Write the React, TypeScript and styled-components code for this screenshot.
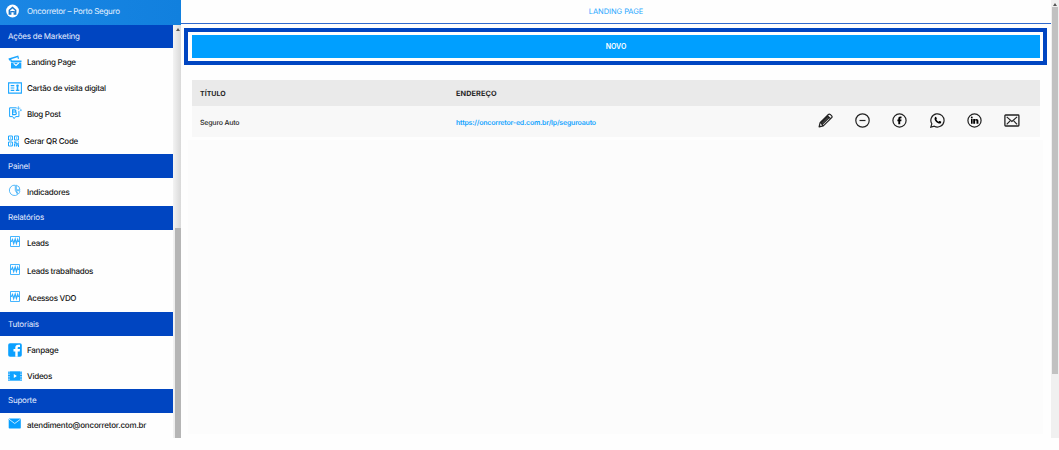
import React from "react";
import styled, { createGlobalStyle } from "styled-components";

const Global = createGlobalStyle`
  * { box-sizing: border-box; }
  body { margin: 0; background: #fefefe; font-family: Inter, "Liberation Sans", sans-serif; overflow: hidden;
    text-rendering: geometricPrecision; }
  svg { display: block; flex: none; }
`;
const Page = styled.div`display: flex; width: 1059px; height: 438px;`;
const Sidebar = styled.aside`width: 181px; height: 438px; flex: none;`;
const Brand = styled.header`
  height: 25px; display: flex; align-items: center; padding: 0 0 4px 6px; gap: 8px;
  background: linear-gradient(90deg, #1b86e4, #1180de); color: #e3f1ff;
`;
const Label = styled.span<{ $size?: number; $spacing?: number; $weight?: number }>`
  font-size: ${(p) => p.$size ?? 8}px; letter-spacing: ${(p) => p.$spacing ?? 0}px;
  font-weight: ${(p) => p.$weight ?? 400}; line-height: 12px; white-space: nowrap;
`;
const MenuArea = styled.div`display: flex; height: 413px;`;
const Menu = styled.nav`width: 173px;`;
const Section = styled.div<{ $h: number }>`
  height: ${(p) => p.$h}px; background: #0045c1; color: #e6eeff;
  display: flex; align-items: center; padding: 0 0 1px 8px;
`;
const Item = styled.div<{ $h: number }>`
  height: ${(p) => p.$h}px; display: flex; align-items: center; padding: 0 0 0 8px; color: #161616;
`;
const IconSlot = styled.span<{ $w: number; $up: number }>`
  width: ${(p) => p.$w}px; flex: none; padding-bottom: ${(p) => p.$up}px;
`;
const SideTrack = styled.div`
  width: 8px; padding: 0 0 0 1px; display: flex; flex-direction: column; align-items: center;
  justify-content: space-between; background: linear-gradient(90deg, #f3f3f3, #d9d9d9);
`;
const SideThumb = styled.div`width: 6px; height: 210px; background: #b5b5b5;`;
const Arrow = styled.i`
  width: 0; height: 0; margin-top: 3px; border: 2px solid transparent; border-top: 0; border-bottom: 3px solid #555;
`;
const Main = styled.main`width: 870px; flex: none;`;
const Title = styled.header`
  height: 24px; border-bottom: 1px solid #2e68cd; color: #27a7ff; display: flex;
  justify-content: center; align-items: center;
`;
const Highlight = styled.div`
  width: 863px; height: 37px; margin: 4px 0 0 3px; border: 4px solid #0045c1; padding: 3px 3px 3px 4px;
`;
const NewButton = styled.button`
  display: flex; justify-content: center; align-items: center; width: 848px; height: 23px; padding: 0;
  border: 0; background: #009fff; color: #fff; font-family: inherit;
`;
const Table = styled.section`width: 848px; margin: 15px 0 0 11px;`;
const HeadRow = styled.div`
  display: grid; grid-template-columns: 256px 1fr; height: 26px; align-items: center; padding: 1px 0 0 8px;
  background: #eaeaea; color: #262626;
`;
const DataRow = styled.div`
  display: grid; grid-template-columns: 256px 1fr 203px 20px; height: 31px; align-items: center;
  padding: 2px 0 0 8px; background: #f8f8f8; color: #222;
`;
const Link = styled.a`color: #15a4ff; display: flex;`;
const Actions = styled.div`display: flex; justify-content: space-between; padding: 0 0 4px 1px;`;
const EmptyArea = styled.div`height: 294px; margin: 3px 8px 0 7px; background: #fcfcfc;`;
const PageTrack = styled.div`
  width: 8px; background: #f0f0f0; display: flex; flex-direction: column; align-items: center;
`;
const PageThumb = styled.div`width: 6px; height: 367px; margin-top: 1px; background: #c1c1c1;`;

const blue = "#1ba6ff";
const Home = () => (
  <svg width="13" height="14" viewBox="0 0 13 14"><circle cx="6.5" cy="7" r="6.4" fill="#fff" />
    <path d="M6.5 2.6 10.4 6v4.7H7.6V8.2H5.4v2.5H2.6V6z" fill="#1b79cd" />
    <path d="M6.5 4.6 8.9 6.6v2.6h-.2V7H4.3v2.2h-.2V6.6z" fill="#fff" /></svg>
);
const Landing = () => (
  <svg width="14" height="14" viewBox="0 0 14 14">
    <path d="M.4 3.6 10.2.6l.9 3-1.2.3-.4-1.6-6.3 2 .7 1.3H1.2zM2.6 5.4h10.9v1.5H2.6zM3 7.5h10.3v5.9H3z" fill={blue} />
    <path d="m5.6 8.4 2.4 2.1 2.8-2.6" fill="none" stroke="#fff" strokeWidth="1.2" /></svg>
);
const CardIcon = () => (
  <svg width="14" height="12" viewBox="0 0 14 12">
    <path d="M.6.9h12.8v10.2H.6z" fill="none" stroke={blue} strokeWidth="1.1" />
    <path d="M2.7 3.7h3.6M2.7 6h3.6M2.7 8.3h3.6" stroke={blue} strokeWidth="1.2" />
    <circle cx="9.5" cy="3.8" r="1.3" fill={blue} /><path d="M8.7 5h1.6v2.8h1v1.3H7.8V7.8h.9z" fill={blue} /></svg>
);
const Blog = () => (
  <svg width="14" height="14" viewBox="0 0 14 14" fill="none" stroke={blue}>
    <path d="M8.5 1.8H1.6v8.8h3l1.5 2 1.6-2h3.2V5" strokeWidth="1" />
    <path d="M4.6 3.8h2c1.7 0 1.7 2.2 0 2.2h-2 2.4c1.8 0 1.8 2.6 0 2.6H4.6z" strokeWidth="1.2" />
    <path d="M10.4.2v4M8.4 2.2h4M12.8 3.2v2M11.8 4.2h2" strokeWidth=".6" /></svg>
);
const Qr = () => (
  <svg width="11" height="12" viewBox="0 0 11 12" fill="none" stroke={blue} strokeWidth="1">
    <path d="M.5 1h3.9v4H.5zM6.5 1h3.9v4H6.5zM.5 7h3.9v4H.5z" />
    <path d="M2 3h1M8 3h1M2 9h1M6 7.1h2v1.6h3M6.5 8.5v3M8.3 9.5v2M8 10h2.5v2M10.4 6.5v1" strokeWidth="1.1" /></svg>
);
const Pie = () => (
  <svg width="13" height="13" viewBox="0 0 13 13" fill="none" stroke="#45b2f8" strokeWidth=".9">
    <path d="M7.3 1.2a5.2 5.2 0 1 0 2.4 9.3L7.3 6.4zM8.3 1.2v4.6h3.6A4.6 4.6 0 0 0 8.3 1.2M8.2 6.7l2.1 3.3c1-.9 1.5-1.9 1.5-3.3z" /></svg>
);
const Pulse = () => (
  <svg width="13" height="11" viewBox="0 0 13 11" fill="none" stroke="#30adff">
    <path d="M2.5.5h9v10h-9z" strokeWidth=".9" />
    <path d="M2.2 5.5h1.2l1.1-2 1.2 4L7.2 3l1.2 4.5 1.3-4 .7 2h1.4" strokeWidth="1.2" /></svg>
);
const Fanpage = () => (
  <svg width="14" height="14" viewBox="0 0 14 14"><rect x=".2" y=".2" width="13.6" height="13.6" rx="1.8" fill="#0ba0ff" />
    <path d="M7.3 13.8V8.4H5.5V6.1h1.8V4.7c0-2 1-3 2.9-3H12v2.2h-1.2c-.9 0-1.1.4-1.1 1.1v1.1H12l-.3 2.3h-2v5.4z" fill="#fff" /></svg>
);
const Video = () => (
  <svg width="14" height="10" viewBox="0 0 14 10"><path d="M0 .3h14v9.4H0z" fill="#10a2ff" />
    <path d="M1 0v10M13 0v10" stroke="#fff" strokeWidth=".9" strokeDasharray="1.5 1" /><path d="m5.8 3 3.1 2-3.1 2z" fill="#fff" /></svg>
);
const MailBlue = () => (
  <svg width="13" height="11" viewBox="0 0 13 11"><rect x=".7" y=".5" width="12.1" height="10" rx=".8" fill="#079fff" />
    <path d="m1 1.2 5.7 4.3 5.8-4.3" fill="none" stroke="#d9f2ff" strokeWidth=".9" /></svg>
);

const Pencil = () => (
  <svg width="15" height="15" viewBox="0 0 15 15" fill="none" stroke="#222" strokeWidth="1.2" strokeLinejoin="round">
    <path d="m1.1 13.9 1-4.3L10.4 1.5q.8-.8 1.8-.1l1.5 1.5q.8.9 0 1.7L5.3 12.9zM2.1 9.6l1.4.4.4 1.4 1.4 1.5M9.3 2.6l3.3 3.2M3.5 10l7-7M4.3 11.3l7.1-7M1.2 13.8l1.2-1.1" /></svg>
);
const Minus = () => (
  <svg width="15" height="15" viewBox="0 0 15 15" fill="none" stroke="#222" strokeWidth="1.2"><circle cx="7.5" cy="7.5" r="6.7" /><path d="M4.5 7.5h6" /></svg>
);
const Facebook = () => (
  <svg width="15" height="15" viewBox="0 0 15 15"><circle cx="7.5" cy="7.5" r="6.6" fill="none" stroke="#222" strokeWidth="1.2" />
    <path d="M6.3 11.3V8.2H5.4V6.5h.9v-.9c0-1.3.8-2.1 2.2-2.1h1v1.7h-.8c-.4 0-.5.2-.5.6v.7h1.3l-.2 1.7H8.2v3.1z" fill="#000" /></svg>
);
const Whatsapp = () => (
  <svg width="15" height="15" viewBox="0 0 15 15"><path d="m.8 14.1 1-3.3a6.6 6.6 0 1 1 2.5 2.4z" fill="none" stroke="#222" strokeWidth="1.2" />
    <path d="M5.2 4.1c.6-.5 1-.2 1.2.3l.4 1c.2.5-.5.8-.5 1.2.5 1 1.2 1.7 2.2 2.1.5 0 .8-.9 1.3-.7l1.2.6c.4.3.2 1.2-.2 1.6-1.1 1-3.4 0-4.8-1.5C4.5 7.3 4 5.1 5.2 4.1z" fill="#000" /></svg>
);
const Linkedin = () => (
  <svg width="15" height="15" viewBox="0 0 15 15"><circle cx="7.5" cy="7.5" r="6.6" fill="none" stroke="#222" strokeWidth="1.2" />
    <circle cx="4.8" cy="4.5" r=".9" /><path d="M4 6h1.6v4.7H4zM6.2 6H8v.6c1.2-1.2 3.4-.6 3.4 1.3v2.8H9.5V8.2c0-1.2-1.4-1.1-1.4 0v2.5H6.2z" /></svg>
);
const Mail = () => (
  <svg width="16" height="15" viewBox="0 0 16 15" fill="none" stroke="#222" strokeWidth="1.3"><rect x=".9" y="2" width="14" height="11" rx=".7" />
    <path d="m2.7 3.9 5.2 4.5 5.2-4.5M2.7 11.3l3.4-3.4M13.1 11.3 9.7 7.9" strokeWidth="1.2" /></svg>
);

type Entry = { text: string; h: number; icon?: () => React.ReactElement; slot?: number; up?: number; spacing?: number };
const entries: Entry[] = [
  { text: "Ações de Marketing", h: 23, spacing: -0.22 },
  { text: "Landing Page", h: 27, icon: Landing, spacing: -0.27 },
  { text: "Cartão de visita digital", h: 26, icon: CardIcon, spacing: -0.27 },
  { text: "Blog Post", h: 26, icon: Blog, up: 3, spacing: -0.27 },
  { text: "Gerar QR Code", h: 27, icon: Qr, slot: 16, spacing: -0.25 },
  { text: "Painel", h: 24, spacing: -0.18 },
  { text: "Indicadores", h: 27.5, icon: Pie, up: 3, spacing: -0.22 },
  { text: "Relatórios", h: 24, spacing: -0.15 },
  { text: "Leads", h: 27.5, icon: Pulse, up: 3, spacing: -0.25 },
  { text: "Leads trabalhados", h: 27.5, icon: Pulse, up: 3, spacing: -0.27 },
  { text: "Acessos VDO", h: 27.5, icon: Pulse, up: 3, spacing: -0.29 },
  { text: "Tutoriais", h: 24, spacing: -0.18 },
  { text: "Fanpage", h: 27, icon: Fanpage, spacing: -0.25 },
  { text: "Videos", h: 25.5, icon: Video, spacing: -0.25 },
  { text: "Suporte", h: 24, spacing: -0.22 },
  { text: "atendimento@oncorretor.com.br", h: 25.5, icon: MailBlue, up: 3, spacing: -0.2 },
];

export default function App() {
  return (
    <>
      <Global />
      <Page>
        <Sidebar>
          <Brand><Home /><Label $spacing={-0.27}>Oncorretor – Porto Seguro</Label></Brand>
          <MenuArea>
            <Menu>
              {entries.map(({ text, h, icon: Icon, slot, up, spacing }) =>
                Icon ? (
                  <Item key={text} $h={h}>
                    <IconSlot $w={slot ?? 19} $up={up ?? 0}><Icon /></IconSlot>
                    <Label $spacing={spacing} $weight={500}>{text}</Label>
                  </Item>
                ) : (
                  <Section key={text} $h={h}><Label $spacing={spacing}>{text}</Label></Section>
                )
              )}
            </Menu>
            <SideTrack><Arrow /><SideThumb /></SideTrack>
          </MenuArea>
        </Sidebar>
        <Main>
          <Title><Label $size={7.5} $spacing={-0.05}>LANDING PAGE</Label></Title>
          <Highlight><NewButton><Label $size={7} $weight={600}>NOVO</Label></NewButton></Highlight>
          <Table>
            <HeadRow><Label $size={7} $weight={700}>TÍTULO</Label><Label $size={7.3} $weight={700} $spacing={0.1}>ENDEREÇO</Label></HeadRow>
            <DataRow>
              <Label $size={7} $spacing={-0.2} $weight={500}>Seguro Auto</Label>
              <Link><Label $size={7} $weight={600} $spacing={-0.2}>https://oncorretor-ed.com.br/lp/seguroauto</Label></Link>
              <Actions><Pencil /><Minus /><Facebook /><Whatsapp /><Linkedin /><Mail /></Actions>
            </DataRow>
          </Table>
          <EmptyArea />
        </Main>
        <PageTrack><Arrow /><PageThumb /></PageTrack>
      </Page>
    </>
  );
}
